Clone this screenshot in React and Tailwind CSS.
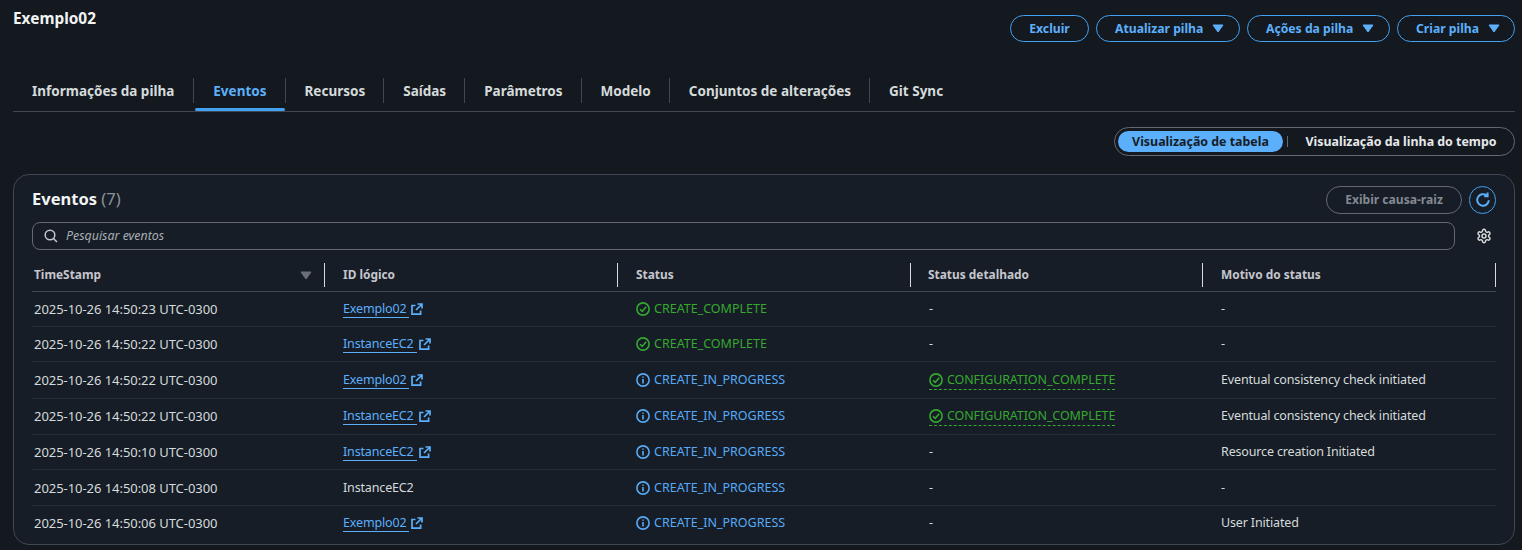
import React from "react";

const Caret = ({ className = "" }) => (
  <svg width="12" height="9" viewBox="0 0 12 9" className={className}>
    <path d="M1 1h10L6 8z" fill="currentColor" stroke="currentColor" strokeWidth="1" strokeLinejoin="round" />
  </svg>
);

const External = () => (
  <svg width="12" height="12" viewBox="0 0 12 12" fill="none" stroke="currentColor" strokeWidth="1.7" className="ml-[2px] shrink-0">
    <path d="M4.5 2.5H1v8.6h8.6V7.5" />
    <path d="M6.5 1H11v4.5M11 1 5 7" />
  </svg>
);

const CheckIcon = () => (
  <svg width="14" height="14" viewBox="0 0 14 14" fill="none" stroke="#35a82f" strokeWidth="1.6" className="shrink-0">
    <circle cx="7" cy="7" r="6.1" />
    <path d="M4 7.2 6.2 9.4 10.2 4.8" />
  </svg>
);

const InfoIcon = () => (
  <svg width="14" height="14" viewBox="0 0 14 14" fill="none" stroke="#58aaf6" strokeWidth="1.6" className="shrink-0">
    <circle cx="7" cy="7" r="6.1" />
    <path d="M7 6v4.4" />
    <path d="M7 3.4v1.4" />
  </svg>
);

const Btn = ({ label, caret, w }) => (
  <button className={`${w} h-[27px] rounded-full border border-[#42a1f0] flex items-center gap-[9px] text-[#5cb0fb] text-[12.2px] font-bold ${caret ? "justify-start pl-[18px]" : "justify-center"}`}>
    <span>{label}</span>
    {caret && <Caret />}
  </button>
);

const tabs = ["Informações da pilha", "Eventos", "Recursos", "Saídas", "Parâmetros", "Modelo", "Conjuntos de alterações", "Git Sync"];

const Status = ({ kind, text, tight }) =>
  kind === "ok" ? (
    <span className={`flex items-center gap-[4px] text-[#37a82f] ${tight ? "tracking-[-0.1px]" : ""}`}><CheckIcon />{text}</span>
  ) : (
    <span className="flex items-center gap-[4px] text-[#58aaf6]"><InfoIcon />{text}</span>
  );

const rows = [
  ["2025-10-26 14:50:23 UTC-0300", "Exemplo02", true, "ok", "CREATE_COMPLETE", false, "-", "h-[35px]"],
  ["2025-10-26 14:50:22 UTC-0300", "InstanceEC2", true, "ok", "CREATE_COMPLETE", false, "-", "h-[35px]"],
  ["2025-10-26 14:50:22 UTC-0300", "Exemplo02", true, "info", "CREATE_IN_PROGRESS", true, "Eventual consistency check initiated", "h-[37px]"],
  ["2025-10-26 14:50:22 UTC-0300", "InstanceEC2", true, "info", "CREATE_IN_PROGRESS", true, "Eventual consistency check initiated", "h-[36px] pb-[1px]"],
  ["2025-10-26 14:50:10 UTC-0300", "InstanceEC2", true, "info", "CREATE_IN_PROGRESS", false, "Resource creation Initiated", "h-[35px]"],
  ["2025-10-26 14:50:08 UTC-0300", "InstanceEC2", false, "info", "CREATE_IN_PROGRESS", false, "-", "h-[36px]"],
  ["2025-10-26 14:50:06 UTC-0300", "Exemplo02", true, "info", "CREATE_IN_PROGRESS", false, "User Initiated", "h-[35px] pb-[1px]"],
];

const grid = "grid grid-cols-[293px_293px_293px_292px_293px]";

const Head = ({ label, first, pad = "pl-[18px]" }) => (
  <div className={`flex items-center justify-between h-[24px] border-r border-[#d5dbdb] ${first ? "pl-[2px] pr-[12px]" : pad}`}>
    <span className="text-[11.9px] leading-[16px] pb-[1px] font-bold text-[#c6c6cd]">{label}</span>
    {first && <Caret className="text-[#6b6f76] mb-[-1px]" />}
  </div>
);

export default function App() {
  return (
    <div className="w-[1522px] h-[550px] overflow-hidden bg-[#141920] text-[#d5dbdb] px-[13px] font-['Noto_Sans',sans-serif] text-[12.5px] leading-[18px] flex flex-col">
      <div className="flex justify-between pt-[9px]">
        <h1 className="text-[15.4px] leading-[20px] font-bold text-[#f2f3f3]">Exemplo02</h1>
        <div className="flex gap-[7px] mt-[6px] mr-[-6px]">
          <Btn label="Excluir" w="w-[79px]" />
          <Btn label="Atualizar pilha" caret w="w-[144px]" />
          <Btn label="Ações da pilha" caret w="w-[143px]" />
          <Btn label="Criar pilha" caret w="w-[118px]" />
        </div>
      </div>

      <div className="flex items-start h-[34px] mt-[36px] border-b border-[#414750] mr-[-6px]">
        {tabs.map((t, i) => (
          <div key={t} className={`relative h-[25px] pl-[19px] flex items-center text-[13.5px] font-bold ${i > 0 ? "border-l border-[#414750] pr-[18px]" : "pr-[19px]"} ${i === 1 ? "text-[#5cb0fb]" : "text-[#d5dbdb]"}`}>
            {t}
            {i === 1 && <span className="absolute left-[1px] right-0 bottom-[-8px] h-[3px] rounded-sm bg-[#42a1f0]" />}
          </div>
        ))}
      </div>

      <div className="flex justify-end mt-[15px] mr-[-6px]">
        <div className="h-[29px] w-[401px] rounded-full border border-[#656871] flex items-center px-[3px] text-[12.4px] font-bold">
          <span className="h-[21px] w-[165px] rounded-full bg-[#5cb0fb] text-[#161d26] flex items-center justify-center">Visualização de tabela</span>
          <span className="w-px h-[11px] bg-[#656871] ml-[4px]" />
          <span className="flex-1 text-center pl-[3px] text-[#e6e8ea]">Visualização da linha do tempo</span>
        </div>
      </div>

      <div className="mt-[18px] mr-[-6px] h-[371px] rounded-[16px] border border-[#414750] bg-[#161d26] px-[18px] pt-[10px]">
        <div className="flex items-center justify-between h-[29px]">
          <div className="text-[16.5px] leading-[24px] pb-[2px]"><span className="font-bold text-[#f2f3f3]">Eventos</span> <span className="text-[#8d9199]">(7)</span></div>
          <div className="flex items-center gap-[7px]">
            <button className="w-[136px] h-[28px] rounded-full border border-[#656871] text-[#848991] text-[12.1px] font-bold">Exibir causa-raiz</button>
            <button className="w-[27px] h-[28px] rounded-full border border-[#42a1f0] flex items-center justify-center text-[#5cb0fb]">
              <svg width="16" height="16" viewBox="0 0 16 16" fill="none" stroke="currentColor" strokeWidth="2">
                <path d="M13.8 8.2A5.8 5.8 0 1 1 11.6 3.4" />
                <path d="M12.6 0.6V4.2H9.2" />
              </svg>
            </button>
          </div>
        </div>

        <div className="flex items-center mt-[8px]">
          <div className="w-[1423px] h-[28px] rounded-[8px] border border-[#656871] flex items-center pl-[11px] text-[#a8adb4] italic text-[12.4px]">
            <svg width="14" height="14" viewBox="0 0 14 14" fill="none" stroke="#c6c6cd" strokeWidth="1.5" className="mr-[8px]">
              <circle cx="6" cy="6" r="4.8" />
              <path d="M9.5 9.5 13 13" />
            </svg>
            Pesquisar eventos
          </div>
          <svg width="16" height="16" viewBox="0 0 24 24" fill="none" stroke="#d5dbdb" strokeWidth="2.2" className="ml-[21px]">
            <path d="M12.22 2h-.44a2 2 0 0 0-2 2v.18a2 2 0 0 1-1 1.73l-.43.25a2 2 0 0 1-2 0l-.15-.08a2 2 0 0 0-2.73.73l-.22.38a2 2 0 0 0 .73 2.73l.15.1a2 2 0 0 1 1 1.72v.51a2 2 0 0 1-1 1.74l-.15.09a2 2 0 0 0-.73 2.73l.22.38a2 2 0 0 0 2.73.73l.15-.08a2 2 0 0 1 2 0l.43.25a2 2 0 0 1 1 1.73V20a2 2 0 0 0 2 2h.44a2 2 0 0 0 2-2v-.18a2 2 0 0 1 1-1.73l.43-.25a2 2 0 0 1 2 0l.15.08a2 2 0 0 0 2.73-.73l.22-.39a2 2 0 0 0-.73-2.73l-.15-.08a2 2 0 0 1-1-1.74v-.5a2 2 0 0 1 1-1.74l.15-.09a2 2 0 0 0 .73-2.73l-.22-.38a2 2 0 0 0-2.73-.73l-.15.08a2 2 0 0 1-2 0l-.43-.25a2 2 0 0 1-1-1.73V4a2 2 0 0 0-2-2z" />
            <circle cx="12" cy="12" r="3" />
          </svg>
        </div>

        <div className="mt-[8px] w-[1464px]">
          <div className={`${grid} h-[34px] items-center border-b border-[#414750]`}>
            <Head label="TimeStamp" first />
            <Head label="ID lógico" />
            <Head label="Status" />
            <Head label="Status detalhado" pad="pl-[17px]" />
            <Head label="Motivo do status" />
          </div>
          {rows.map((r, i) => (
            <div key={i} className={`${grid} ${r[7]} items-center ${i < rows.length - 1 ? "border-b border-[#232b37]" : ""}`}>
              <div className="pl-[2px] text-[13px] tracking-[-0.05px]">{r[0]}</div>
              <div className="pl-[18px] flex items-center tracking-[-0.15px]">
                {r[2] ? (
                  <span className="flex items-center text-[#5cb0fb]">
                    <span className="border-b border-[#5cb0fb] leading-[17px] pr-[3px]">{r[1]}</span>
                    <External />
                  </span>
                ) : r[1]}
              </div>
              <div className="pl-[18px] flex"><Status kind={r[3]} text={r[4]} /></div>
              <div className="pl-[18px] flex">
                {r[5] ? (
                  <span className="border-b border-dashed border-[#37a82f] leading-[19px]"><Status kind="ok" text="CONFIGURATION_COMPLETE" tight /></span>
                ) : "-"}
              </div>
              <div className="pl-[18px] tracking-[-0.15px]">{r[6]}</div>
            </div>
          ))}
        </div>
      </div>
    </div>
  );
}
